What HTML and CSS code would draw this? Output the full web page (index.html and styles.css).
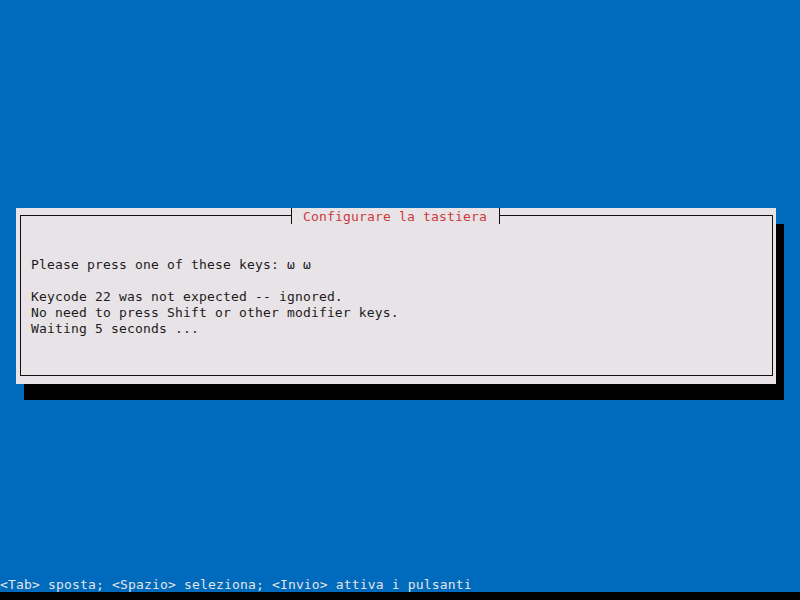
FILE: index.html
```html
<!DOCTYPE html>
<html lang="it">
<head>
    <meta charset="UTF-8">
    <meta name="viewport" content="width=device-width, initial-scale=1.0">
    <title>Configurare la tastiera</title>
    <link rel="stylesheet" href="styles.css">
</head>
<body>
    <div class="screen">
        <div class="dialog">
            <div class="frame">
                <span class="dialog-title">Configurare la tastiera</span>
                <div class="message">
                    <p>Please press one of these keys: ω ω</p>
                    <p>Keycode 22 was not expected -- ignored.</p>
                    <p>No need to press Shift or other modifier keys.</p>
                    <p>Waiting 5 seconds ...</p>
                </div>
            </div>
        </div>
        <div class="help-line">&lt;Tab&gt; sposta; &lt;Spazio&gt; seleziona; &lt;Invio&gt; attiva i pulsanti</div>
    </div>
    <div class="bottom-edge"></div>
</body>
</html>
```

FILE: styles.css
```css
:root {
    --color-screen: #006abc;
    --color-dialog: #e8e3e6;
    --color-title: #cc3b3d;
    --color-text: #1c1c1c;
    --color-help: #e4e4e4;
}

* {
    padding: 0;
    margin: 0;
    box-sizing: border-box;
}

body {
    width: 800px;
    height: 600px;
    display: flex;
    flex-direction: column;
    background: #000;
    overflow: hidden;
    font-family: "DejaVu Sans Mono", "Liberation Mono", monospace;
    font-size: 13px;
    letter-spacing: 0.17px;
    line-height: 16px;
}

.screen {
    height: 592px;
    display: flex;
    flex-direction: column;
    background-color: var(--color-screen);
}

.dialog {
    width: 760px;
    height: 176px;
    margin: 208px 0 0 16px;
    padding: 7px 3px 8px 4px;
    background-color: var(--color-dialog);
    box-shadow: 8px 16px 0 #000;
}

.frame {
    position: relative;
    height: 100%;
    border: 1px solid #111;
    padding: 41px 0 0 10px;
    color: var(--color-text);
}

.dialog-title {
    position: absolute;
    top: -8px;
    left: 270px;
    height: 16px;
    padding: 1px 12px 0 11px;
    border-left: 1px solid #111;
    border-right: 1px solid #111;
    background-color: var(--color-dialog);
    color: var(--color-title);
}

.message p:first-child {
    margin-bottom: 16px;
}

.help-line {
    margin-top: auto;
    height: 16px;
    padding-top: 1px;
    color: var(--color-help);
    white-space: pre;
}

.bottom-edge {
    height: 8px;
}
```
